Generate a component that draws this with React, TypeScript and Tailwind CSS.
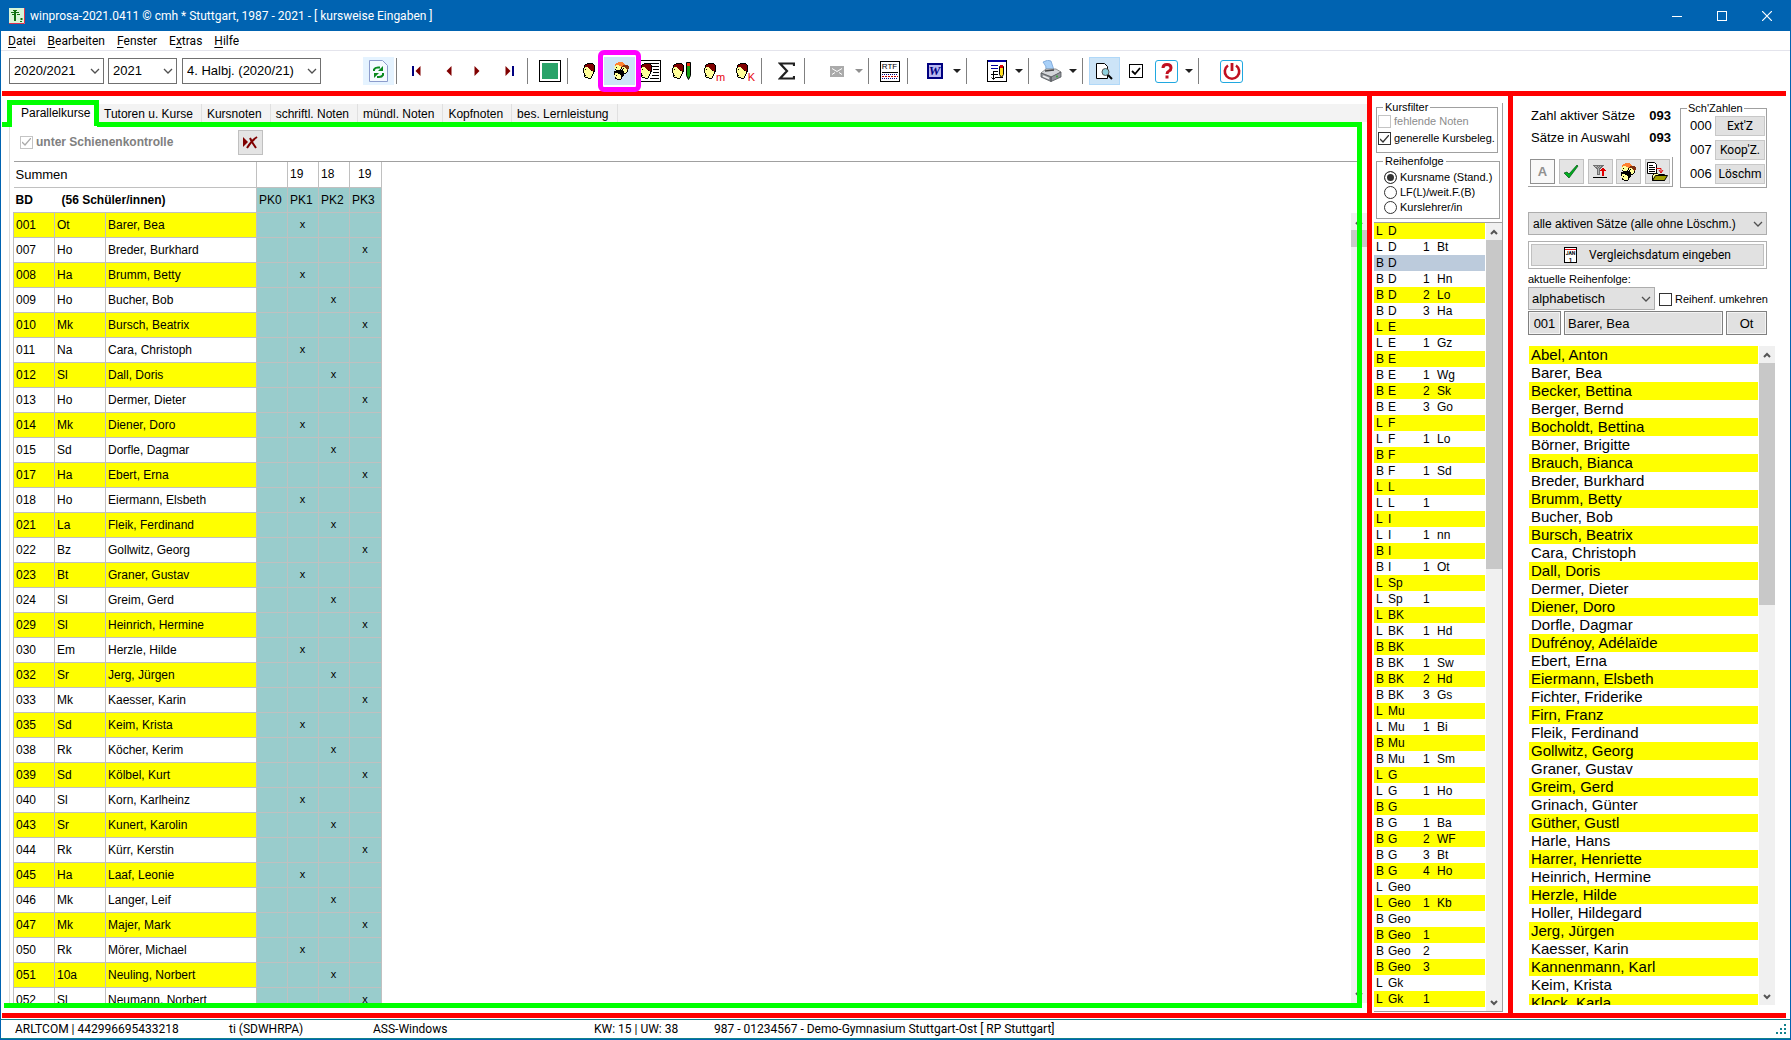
import React from "react";

const SANS = "font-['Liberation_Sans',Arial,sans-serif]";

/* ---------- data ---------- */
const STUDENTS = `001|Ot|Barer, Bea|1
007|Ho|Breder, Burkhard|3
008|Ha|Brumm, Betty|1
009|Ho|Bucher, Bob|2
010|Mk|Bursch, Beatrix|3
011|Na|Cara, Christoph|1
012|Sl|Dall, Doris|2
013|Ho|Dermer, Dieter|3
014|Mk|Diener, Doro|1
015|Sd|Dorfle, Dagmar|2
017|Ha|Ebert, Erna|3
018|Ho|Eiermann, Elsbeth|1
021|La|Fleik, Ferdinand|2
022|Bz|Gollwitz, Georg|3
023|Bt|Graner, Gustav|1
024|Sl|Greim, Gerd|2
029|Sl|Heinrich, Hermine|3
030|Em|Herzle, Hilde|1
032|Sr|Jerg, Jürgen|2
033|Mk|Kaesser, Karin|3
035|Sd|Keim, Krista|1
038|Rk|Köcher, Kerim|2
039|Sd|Kölbel, Kurt|3
040|Sl|Korn, Karlheinz|1
043|Sr|Kunert, Karolin|2
044|Rk|Kürr, Kerstin|3
045|Ha|Laaf, Leonie|1
046|Mk|Langer, Leif|2
047|Mk|Majer, Mark|3
050|Rk|Mörer, Michael|1
051|10a|Neuling, Norbert|2
052|Sl|Neumann, Norbert|3`
  .split("\n")
  .map((l) => l.split("|"));

const COURSES = `L|D||
L|D|1|Bt
B|D||
B|D|1|Hn
B|D|2|Lo
B|D|3|Ha
L|E||
L|E|1|Gz
B|E||
B|E|1|Wg
B|E|2|Sk
B|E|3|Go
L|F||
L|F|1|Lo
B|F||
B|F|1|Sd
L|L||
L|L|1|
L|I||
L|I|1|nn
B|I||
B|I|1|Ot
L|Sp||
L|Sp|1|
L|BK||
L|BK|1|Hd
B|BK||
B|BK|1|Sw
B|BK|2|Hd
B|BK|3|Gs
L|Mu||
L|Mu|1|Bi
B|Mu||
B|Mu|1|Sm
L|G||
L|G|1|Ho
B|G||
B|G|1|Ba
B|G|2|WF
B|G|3|Bt
B|G|4|Ho
L|Geo||
L|Geo|1|Kb
B|Geo||
B|Geo|1|
B|Geo|2|
B|Geo|3|
L|Gk||
L|Gk|1|`
  .split("\n")
  .map((l) => l.split("|"));

const NAMES = [
  "Abel, Anton", "Barer, Bea", "Becker, Bettina", "Berger, Bernd", "Bocholdt, Bettina", "Börner, Brigitte",
  "Brauch, Bianca", "Breder, Burkhard", "Brumm, Betty", "Bucher, Bob", "Bursch, Beatrix", "Cara, Christoph",
  "Dall, Doris", "Dermer, Dieter", "Diener, Doro", "Dorfle, Dagmar", "Dufrénoy, Adélaïde", "Ebert, Erna",
  "Eiermann, Elsbeth", "Fichter, Friderike", "Firn, Franz", "Fleik, Ferdinand", "Gollwitz, Georg",
  "Graner, Gustav", "Greim, Gerd", "Grinach, Günter", "Güther, Gustl", "Harle, Hans", "Harrer, Henriette",
  "Heinrich, Hermine", "Herzle, Hilde", "Holler, Hildegard", "Jerg, Jürgen", "Kaesser, Karin",
  "Kannenmann, Karl", "Keim, Krista", "Klock, Karla",
];

/* ---------- pixel icons ---------- */
const INK: Record<string, string> = {
  K: "#000000", R: "#800000", Y: "#ffff99", O: "#ff8030", B: "#803010",
  r: "#e00000", g: "#707070", l: "#b0b0b0",
};

function Pixels({ rows, x = 0, y = 0 }: { rows: string[]; x?: number; y?: number }) {
  return (
    <g shapeRendering="crispEdges">
      {rows.flatMap((row, j) =>
        [...row].map((c, i) =>
          INK[c] ? <rect key={i + "-" + j} x={x + i} y={y + j} width="1" height="1" fill={INK[c]} /> : null
        )
      )}
    </g>
  );
}

const FACE = [
  "....KKKKKK..",
  "..KKRRRRRRK.",
  ".KRRRRRRRRRK",
  ".KRRRRRRRRRK",
  ".KYYYRRRRRRK",
  "KYYYYYRRRRRK",
  "KYKYYYYRRRRK",
  "KYYYYYYYKRRK",
  "KYYYYYYYYYKK",
  "KYYYYYYYYYK.",
  ".KYYYYYYYYK.",
  ".KYYYYYYYK..",
  ".KKYYYYYYK..",
  ".KYYYYYYK...",
  "..KKKYYYK...",
  ".....KKK....",
];

const GROUP = [
  "....OOOOO......",
  "..OOOOOOOO.....",
  ".OOOOOOOOOO....",
  ".OYYYOOOOBBBBB.",
  ".YYYYYYOBBBBBBB",
  "YYKYYYYKYYYBBBB",
  ".YYYYYYKYKYYBBB",
  ".KYYYYK.KYYYYB.",
  "..KKKKKKKYYYYK.",
  "KKKKKKKKKKYYYK.",
  "KKKKKKKKKKYYK..",
  "KYYYKKKKKKKK...",
  "KYYYYYKKKK.....",
  "YYKYYYYKKK.....",
  ".YYYYYYKK......",
  ".KYYYYYK.......",
  ".KKYYYYK.......",
  "...KKKK........",
];

const FUNNEL = [
  "ggggggggggg...",
  ".gllglglgg....",
  "..gglglgg.....",
  "...gglgg.rr...",
  "....glg.rrrr..",
  "....glgrrrrrr.",
  "....glg..rr...",
  "....glg..rr...",
  "....glg..rr...",
  "....ggg..rr...",
  ".........rr...",
  "..............",
  "KKKKKKKKKKKKKK",
];

const I = ({ w, h, children }: { w: number; h: number; children: React.ReactNode }) => (
  <svg width={w} height={h} viewBox={`0 0 ${w} ${h}`} className="block shrink-0" aria-hidden="true">
    {children}
  </svg>
);

const Chevron = () => (
  <I w={10} h={6}>
    <path d="M1 1l4 4 4-4" fill="none" stroke="#505050" strokeWidth="1.3" />
  </I>
);
const ScrollArrow = ({ up = false }: { up?: boolean }) => (
  <I w={8} h={6}>
    <path d={up ? "M1 5l3-3 3 3" : "M1 1l3 3 3-3"} fill="none" stroke="#555" strokeWidth="2" />
  </I>
);

const AppIcon = () => (
  <I w={16} h={16}>
    <rect width="16" height="16" fill="#d8f5d8" />
    <path d="M15.5 0v15.5H0" fill="none" stroke="#e03050" />
    <path d="M2 4.500h8M3 6.500h4M4 2.500h4M8 6.500h3M11 13.500h2" stroke="#107010" fill="none" />
    <path d="M6 2v11M12.500 10v2" stroke="#107010" strokeWidth="2" fill="none" />
  </I>
);
const Refresh = () => (
  <I w={19} h={22}>
    <path d="M.5.5h13l5 5v16H.5z" fill="#f4faff" stroke="#8c9ccc" />
    <path d="M5 11V9.500q1-2 4-2h2" fill="none" stroke="#0a8a20" strokeWidth="2" />
    <path d="M9 11h5V6z" fill="#0a8a20" />
    <path d="M14 13v2q-1 2-4 2H8" fill="none" stroke="#0a8a20" strokeWidth="2" />
    <path d="M10 13H5v5z" fill="#0a8a20" />
  </I>
);
const Nav = ({ dir, bar = false }: { dir: "l" | "r"; bar?: boolean }) => (
  <I w={9} h={10}>
    {dir === "l" ? <path d="M8.500 0v10L3.500 5z" fill="#800000" /> : <path d="M.5 0v10l5-5z" fill="#800000" />}
    {bar && <rect x={dir === "l" ? 0 : 7} y="0" width="2" height="10" fill="#000080" />}
  </I>
);
const GreenSquare = () => (
  <I w={22} h={22}>
    <rect x=".5" y=".5" width="21" height="21" fill="#fff" stroke="#000" />
    <rect x="3" y="3" width="16" height="16" fill="#2aa36a" />
  </I>
);
const Face = () => <I w={12} h={16}><Pixels rows={FACE} /></I>;
const Group = () => <I w={15} h={18}><Pixels rows={GROUP} /></I>;
const FaceDoc = () => (
  <I w={21} h={22}>
    <rect x=".5" y=".5" width="20" height="21" fill="#fff" stroke="#000" />
    <path d="M10 3.500h9M12 6.500h7M13 9.500h6M13 12.500h6M12 15.500h7M10 18.500h9" stroke="#000" shapeRendering="crispEdges" />
    <Pixels rows={FACE} y={3} />
  </I>
);
const FacePencil = () => (
  <I w={19} h={18}>
    <Pixels rows={FACE} y={1} />
    <path d="M14.500.5h4v13l-2 4-2-4z" fill="#10a010" stroke="#000" />
    <rect x="15" y="1" width="3" height="3" fill="#f03010" />
  </I>
);
const FaceLetter = ({ ch }: { ch: string }) => (
  <span className="flex items-end">
    <Face />
    <span className="-mr-1 -mb-1 text-[11px] leading-3 text-red-600">{ch}</span>
  </span>
);
const Sigma = () => (
  <I w={17} h={18}>
    <path d="M16 4V1.500H2L9 9l-7 7.500h14V14" fill="none" stroke="#202020" strokeWidth="2.200" />
  </I>
);
const Mail = () => (
  <I w={14} h={11}>
    <rect width="14" height="11" fill="#aaaaaa" />
    <path d="M2 2.500l5 3 5-3M2 8.500l3-2M12 8.500l-3-2" stroke="#fff" fill="none" />
  </I>
);
const Rtf = () => (
  <span className="flex h-[21px] w-5 shrink-0 flex-col items-center border border-black bg-white">
    <span className="text-[8px] leading-[10px] text-black">RTF</span>
    <I w={16} h={8}>
      <path d="M0 .5h16" stroke="#000" />
      <path d="M0 2.500h16M0 6.500h16" stroke="#000080" strokeDasharray="1 1" />
      <path d="M0 4.500h16" stroke="#c00000" strokeDasharray="2 1" />
    </I>
  </span>
);
const Word = () => (
  <span className="flex size-4 shrink-0 items-center justify-center border-2 border-[#000080] bg-[#b8b8f0] font-['Liberation_Serif',serif] text-[13px] leading-3 font-bold text-[#000080] italic">W</span>
);
const DocPencil = () => (
  <I w={20} h={22}>
    <rect x=".5" y=".5" width="19" height="21" fill="#fff" stroke="#000" />
    <rect x="1" y="0" width="18" height="2" fill="#0000a0" />
    <path d="M4 5.500h7M4 8.500h7" stroke="#0000a0" />
    <path d="M6 11.500h5M4 14.500h7M8 17.500h8" stroke="#000" />
    <path d="M6.500 11v8M4.500 17.500l2 2 2-2" stroke="#000" fill="none" />
    <path d="M12.500 6.500h4v8l-2 3-2-3z" fill="#ffe020" stroke="#000" />
    <rect x="13" y="5" width="3" height="3" fill="#e00000" />
  </I>
);
const Printer = () => (
  <I w={22} h={22}>
    <path d="M3 2q5-3 8-1l3 9-8 1q1-5-3-9z" fill="#a8d0f8" stroke="#6898d0" strokeWidth=".7" />
    <path d="M1 13l5-4h10l5 3-9 5z" fill="#d4d6da" stroke="#777" strokeWidth=".8" />
    <path d="M5 11l9-1" stroke="#444" strokeWidth="1.500" />
    <path d="M1 13v4l10 4.500V17zM11 17l10-5v5l-10 4.500z" fill="#90949a" stroke="#505458" strokeWidth=".8" />
    <path d="M3 16l6 2.500" stroke="#eee" strokeWidth="1.500" />
    <circle cx="17" cy="16.500" r="1" fill="#3a3" />
  </I>
);
const Preview = () => (
  <I w={17} h={17}>
    <path d="M.5.500h8l3 3v12H.5z" fill="#fff" stroke="#000" />
    <circle cx="9.500" cy="9" r="3.500" fill="#8fd0dc" stroke="#555" />
    <path d="M12 12l4 4" stroke="#000" strokeWidth="2" />
  </I>
);
const Tick = () => (
  <I w={14} h={14}>
    <rect x=".5" y=".5" width="13" height="13" fill="#fff" stroke="#000" />
    <path d="M3 7l3 3 5-6" fill="none" stroke="#000" strokeWidth="1.800" />
  </I>
);
const Help = () => (
  <span className="flex h-[23px] w-[23px] items-center justify-center rounded-[3px] border border-[#20a8e0] bg-white">
    <I w={12} h={16}>
      <path d="M2 5q0-3.500 4-3.500T10 5q0 2-2 3T6 11" fill="none" stroke="#c01020" strokeWidth="3" />
      <rect x="4.500" y="12.500" width="3" height="3" fill="#c01020" />
    </I>
  </span>
);
const Power = () => (
  <span className="flex h-[23px] w-[23px] items-center justify-center rounded-[3px] border border-[#20a8e0] bg-white">
    <I w={18} h={18}>
      <path d="M5 3.500a7.200 7.200 0 1 0 8 0" fill="none" stroke="#c01020" strokeWidth="2.600" />
      <path d="M9 1v8" stroke="#c01020" strokeWidth="2.800" />
    </I>
  </span>
);
const Cross = () => (
  <I w={15} h={13}>
    <path d="M0 1l5 5-5 5z" fill="#800000" />
    <path d="M4 12Q8 5 14 1M7 2l2 4 4 6" fill="none" stroke="#800000" strokeWidth="2" />
  </I>
);
const GreenCheck = () => (
  <I w={16} h={15}>
    <path d="M1 9l3-1 2 2L14 1l1 1L6 14z" fill="#00b020" stroke="#005010" strokeWidth=".7" />
  </I>
);
const Funnel = () => <I w={14} h={13}><Pixels rows={FUNNEL} /></I>;
const Folder = () => (
  <I w={21} h={20}>
    <path d="M.5.500h7l2 2v9H.5z" fill="#fff" stroke="#000" />
    <path d="M2 3.500h4M2 5.500h6M2 7.500h6M2 9.500h6" stroke="#000" />
    <path d="M9 6.500h5v4M12 8l2 3 2-3" stroke="#e00000" fill="none" />
    <path d="M5.500 13.500l2-2h3l1 1h6v6h-12z" fill="#ffff99" stroke="#000" />
    <path d="M5.500 18.500l3-5h12l-3 5z" fill="#a0a000" stroke="#000" />
  </I>
);
const Calendar = () => (
  <span className="flex h-4 w-[13px] shrink-0 flex-col items-center border border-black bg-white">
    <span className="h-[2px] w-full border-b border-red-600" />
    <span className="text-[5px] leading-[7px] font-bold text-black">JAN</span>
    <span className="text-[6px] leading-[5px] font-bold text-black">1</span>
  </span>
);

/* ---------- controls ---------- */
const Sep = () => (
  <div className="flex h-[26px] w-[5px] shrink-0 justify-center">
    <div className="w-px bg-[#808080]" />
  </div>
);
function Tool({ label, className = "", children }: { label: string; className?: string; children: React.ReactNode }) {
  return (
    <button aria-label={label} className={"flex h-7 w-[31px] shrink-0 items-center justify-center " + className}>
      {children}
    </button>
  );
}
const Drop = ({ label, dim = false }: { label: string; dim?: boolean }) => (
  <button aria-label={label} className="flex h-7 w-[14px] shrink-0 items-center justify-center">
    <I w={8} h={4}><path d="M0 0h8L4 4z" fill={dim ? "#909090" : "#202020"} /></I>
  </button>
);
function Combo({ label, value, className, selectClass }: { label: string; value: string; className: string; selectClass: string }) {
  return (
    <div className={"relative flex items-center " + className}>
      <select aria-label={label} className={"h-full w-full appearance-none rounded-none border pr-5 pl-1 text-black " + selectClass}>
        <option>{value}</option>
      </select>
      <span className="pointer-events-none absolute right-1"><Chevron /></span>
    </div>
  );
}
function Check({ label, checked = false, disabled = false, className = "" }: { label: string; checked?: boolean; disabled?: boolean; className?: string }) {
  return (
    <label className={"flex items-center gap-[3px] whitespace-nowrap " + className}>
      <span className="relative flex size-[13px] shrink-0 items-center justify-center">
        <input
          type="checkbox"
          defaultChecked={checked}
          disabled={disabled}
          className="size-[13px] appearance-none border border-[#333] bg-white disabled:border-[#c4c4c4]"
        />
        {checked && (
          <span className="pointer-events-none absolute">
            <I w={9} h={8}>
              <path d="M0 4l3 3 6-7" fill="none" stroke={disabled ? "#aaa" : "#333"} strokeWidth="1.300" />
            </I>
          </span>
        )}
      </span>
      {label}
    </label>
  );
}
const Radio = ({ label, checked = false }: { label: string; checked?: boolean }) => (
  <label className="flex h-[15px] items-center gap-[3px] whitespace-nowrap">
    <input
      type="radio"
      name="reihenfolge"
      defaultChecked={checked}
      className="size-[13px] shrink-0 appearance-none rounded-full border border-[#333] bg-white checked:bg-[#333] checked:shadow-[inset_0_0_0_2px_white]"
    />
    {label}
  </label>
);
function Scroll({ thumb }: { thumb: string }) {
  return (
    <div className="flex w-4 shrink-0 flex-col items-center bg-[#f0f0f0]" aria-hidden="true">
      <div className="flex h-[17px] shrink-0 items-center"><ScrollArrow up /></div>
      <div className={"w-full bg-[#c8c8c8] " + thumb} />
      <div className="flex-1" />
      <div className="flex h-[17px] shrink-0 items-center"><ScrollArrow /></div>
    </div>
  );
}

/* ---------- sections ---------- */
function TitleBar() {
  return (
    <header className="flex h-[31px] shrink-0 items-center bg-[#0063b1] pl-2 text-xs text-white">
      <AppIcon />
      <h1 className="ml-[5px] flex-1">winprosa-2021.0411 © cmh * Stuttgart, 1987 - 2021 - [ kursweise Eingaben ]</h1>
      <button aria-label="Minimieren" className="flex h-full w-[45px] items-center justify-center">
        <I w={10} h={10}><path d="M0 5.500h10" stroke="#fff" /></I>
      </button>
      <button aria-label="Maximieren" className="flex h-full w-[45px] items-center justify-center">
        <I w={10} h={10}><rect x=".5" y=".5" width="9" height="9" fill="none" stroke="#fff" /></I>
      </button>
      <button aria-label="Schließen" className="flex h-full w-[46px] items-center justify-center">
        <I w={10} h={10}><path d="M0 0l10 10M10 0L0 10" stroke="#fff" strokeWidth="1.200" /></I>
      </button>
    </header>
  );
}

const MENU = [["", "D", "atei"], ["", "B", "earbeiten"], ["", "F", "enster"], ["E", "x", "tras"], ["", "H", "ilfe"]];

function MenuBar() {
  return (
    <nav className="flex h-5 shrink-0 items-center gap-3 border-b border-[#e4e4ec] pl-[7px] text-xs text-black">
      {MENU.map(([a, b, c]) => (
        <button key={b}>{a}<span className="underline underline-offset-2">{b}</span>{c}</button>
      ))}
    </nav>
  );
}

function Toolbar() {
  const box = "border-[#707070] bg-white text-[13px]";
  return (
    <div className={"flex h-10 shrink-0 items-center pl-2 " + SANS}>
      <Combo label="Schuljahr" value="2020/2021" className="h-[26px] w-[95px]" selectClass={box} />
      <Combo label="Jahr" value="2021" className="ml-1 h-[26px] w-[69px]" selectClass={box} />
      <Combo label="Halbjahr" value="4. Halbj. (2020/21)" className="ml-[5px] h-[26px] w-[139px]" selectClass={box} />
      <Tool label="Aktualisieren" className="ml-[42px] bg-[#e5f3ff]"><Refresh /></Tool>
      <Sep />
      <Tool label="Erster" className="ml-[2px]"><Nav dir="l" bar /></Tool>
      <Tool label="Zurück"><Nav dir="l" /></Tool>
      <Tool label="Weiter"><Nav dir="r" /></Tool>
      <Tool label="Letzter"><Nav dir="r" bar /></Tool>
      <Sep />
      <Tool label="Tabelle" className="ml-1"><GreenSquare /></Tool>
      <Sep />
      <Tool label="Schüler" className="ml-[3px]"><Face /></Tool>
      <Tool label="Kurse" className="relative bg-[#cce4f7] pl-1">
        <Group />
        <span className="pointer-events-none absolute -inset-x-[6px] -inset-y-[7px] z-10 rounded-md border-5 border-[#ff00ff]" />
      </Tool>
      <Tool label="Schülerliste"><FaceDoc /></Tool>
      <Tool label="Bearbeiten"><FacePencil /></Tool>
      <Tool label="mündlich"><FaceLetter ch="m" /></Tool>
      <Tool label="Kopfnoten"><FaceLetter ch="K" /></Tool>
      <Sep />
      <Tool label="Summe" className="ml-[7px]"><Sigma /></Tool>
      <Sep />
      <Tool label="Mail" className="ml-[14px]"><Mail /></Tool>
      <Drop label="Mail-Optionen" dim />
      <Sep />
      <Tool label="RTF" className="ml-[3px]"><Rtf /></Tool>
      <Sep />
      <Tool label="Word" className="ml-[9px]"><Word /></Tool>
      <Drop label="Word-Optionen" />
      <Sep />
      <Tool label="Formular" className="ml-3"><DocPencil /></Tool>
      <Drop label="Formular-Optionen" />
      <Sep />
      <Tool label="Drucken" className="ml-1"><Printer /></Tool>
      <Drop label="Druck-Optionen" />
      <Sep />
      <Tool label="Vorschau" className="ml-1 border border-[#b0d8f8] bg-[#cce4f7]"><Preview /></Tool>
      <Tool label="Auswahl"><Tick /></Tool>
      <Tool label="Hilfe"><Help /></Tool>
      <Drop label="Hilfe-Optionen" />
      <Sep />
      <Tool label="Beenden" className="ml-[15px]"><Power /></Tool>
    </div>
  );
}

const TABS = ["Tutoren u. Kurse", "Kursnoten", "schriftl. Noten", "mündl. Noten", "Kopfnoten", "bes. Lernleistung"];

function CoursePanel() {
  const line = "border-[#c0c0c0]";
  return (
    <main className={"relative flex min-w-0 flex-1 flex-col text-xs text-black " + SANS}>
      <div className="flex h-[26px] shrink-0 items-end pl-[6px]" role="tablist">
        <button role="tab" aria-selected="true" className="z-10 mt-1 flex h-[26px] w-[92px] shrink-0 items-start self-start border-x-5 border-t-5 border-[#00ff00] bg-white pl-[9px]">
          Parallelkurse
        </button>
        <div className="flex h-[18px] flex-1 bg-[#f3f3f3]">
          {TABS.map((t) => (
            <button key={t} role="tab" className="border-r border-[#e0e0e0] pt-[3px] pr-2 pl-[5px] leading-[15px] whitespace-nowrap">{t}</button>
          ))}
        </div>
      </div>
      <div className="ml-2 flex min-h-0 flex-1 flex-col border-l border-[#dcdcdc] pt-[6px]">
        <div className="flex h-[33px] shrink-0 items-start pt-[2px] pl-[10px]">
          <Check label="unter Schienenkontrolle" checked disabled className="h-6 w-[218px] font-bold text-[#808080]" />
          <button aria-label="Kontrolle löschen" className="flex size-[25px] items-center justify-center border border-[#c0c0c0] bg-[#e4e4e4]">
            <Cross />
          </button>
        </div>
        <div className="mr-[10px] ml-1 h-px shrink-0 bg-[#a0a0a0]" />
        <div className="flex min-h-0 flex-1 pl-[3px]">
          <div className="min-w-0 flex-1 overflow-hidden">
            <table className="w-[368px] table-fixed border-collapse">
              <colgroup>
                <col className="w-[41px]" /><col className="w-[51px]" /><col className="w-[151px]" />
                <col className="w-[31px]" /><col className="w-[31px]" /><col className="w-[31px]" /><col className="w-[32px]" />
              </colgroup>
              <thead>
                <tr className={"h-[25px] border-b " + line}>
                  <th colSpan={3} className="pl-[2px] text-left text-[13px] font-normal">Summen</th>
                  <td className={"border-x " + line} />
                  <td className={"border-x pl-[2px] " + line}>19</td>
                  <td className={"border-x pl-[2px] " + line}>18</td>
                  <td className={"border-x pl-2 " + line}>19</td>
                </tr>
                <tr className={"h-[25px] border-b " + line}>
                  <th colSpan={3} className="pl-[2px] text-left font-bold">
                    <span className="inline-block w-[46px]">BD</span>(56 Schüler/innen)
                  </th>
                  {["PK0", "PK1", "PK2", "PK3"].map((p) => (
                    <th key={p} className={"border-x bg-[#99cccc] pl-[2px] text-left font-normal " + line}>{p}</th>
                  ))}
                </tr>
              </thead>
              <tbody>
                {STUDENTS.map(([nr, tu, name, k], i) => (
                  <tr key={nr} className={"h-[25px] " + (i % 2 ? "bg-white" : "bg-[#ffff00]")}>
                    <td className={"border pl-[2px] " + line}>{nr}</td>
                    <td className={"border pl-[2px] " + line}>{tu}</td>
                    <td className={"border pl-[2px] " + line}>{name}</td>
                    {["0", "1", "2", "3"].map((c) => (
                      <td key={c} className={"border bg-[#99cccc] pr-px text-center text-[11px] " + line}>{c === k ? "x" : ""}</td>
                    ))}
                  </tr>
                ))}
              </tbody>
            </table>
          </div>
          <div className="mt-[51px] mb-[10px] flex"><Scroll thumb="h-[17px]" /></div>
        </div>
      </div>
      <div className="pointer-events-none absolute top-[26px] right-[5px] bottom-[5px] left-[96px] border-t-5 border-r-5 border-[#00ff00]" />
      <div className="pointer-events-none absolute right-[5px] bottom-0 left-[3px] h-[10px] border-t-5 border-[#00ff00] bg-white" />
      <div className="pointer-events-none absolute top-[26px] left-px h-[5px] w-[10px] bg-[#00ff00]" />
    </main>
  );
}

function FilterPanel() {
  return (
    <aside className={"flex w-[136px] shrink-0 flex-col pt-[7px] pr-[5px] pb-px pl-[2px] text-[11px] text-black " + SANS}>
      <div className="flex min-h-0 flex-1 flex-col border-r border-b border-[#a0a0a0]">
        <div className="h-[119px] shrink-0 pr-1 pl-[2px]">
          <fieldset className="-mt-[3px] h-[53px] border border-[#a0a0a0] px-px">
            <legend className="ml-[5px] px-[2px] leading-[14px]">Kursfilter</legend>
            <Check label="fehlende Noten" disabled className="h-[15px] text-[#8c8c8c]" />
            <Check label="generelle Kursbeleg." checked className="mt-[2px] h-[15px]" />
          </fieldset>
          <fieldset className="mt-px h-[65px] border border-[#a0a0a0] px-[7px]">
            <legend className="-ml-px px-[2px] leading-[14px]">Reihenfolge</legend>
            <div className="pt-[2px]">
              <Radio label="Kursname (Stand.)" checked />
              <Radio label="LF(L)/weit.F.(B)" />
              <Radio label="Kurslehrer/in" />
            </div>
          </fieldset>
        </div>
        <div className="flex min-h-0 flex-1 border-t border-[#a0a0a0]">
          <ul className="mr-px min-w-0 flex-1 overflow-hidden text-xs leading-4">
            {COURSES.map(([a, b, c, d], i) => (
              <li key={i} className={"flex h-4 pl-[2px] " + (i === 2 ? "bg-[#bccbdc]" : i % 2 ? "bg-white" : "bg-[#ffff00]")}>
                <span className="w-3">{a}</span>
                <span className="w-[35px]">{b}</span>
                <span className="w-[14px]">{c}</span>
                <span>{d}</span>
              </li>
            ))}
          </ul>
          <Scroll thumb="h-[329px]" />
        </div>
      </div>
    </aside>
  );
}

function CountRow({ n, label }: { n: string; label: string }) {
  return (
    <div className="flex items-center justify-between">
      <span>{n}</span>
      <button className="h-5 w-[50px] border border-[#c8c8c8] bg-[#e1e1e1] font-[Roboto,sans-serif] text-xs leading-none">{label}</button>
    </div>
  );
}

function SelectionPanel() {
  const tool = "flex size-[25px] items-center justify-center border ";
  const grey = tool + "border-[#c0c0c0] bg-[#e4e4e4]";
  const field = "h-6 border border-[#808080] bg-[#e1e1e1] text-[13px] outline outline-1 -outline-offset-2 outline-[#f4f4f4]";
  return (
    <aside className={"flex w-[277px] shrink-0 flex-col pr-[15px] pl-[15px] text-xs text-black " + SANS}>
      <div className="flex h-[116px] shrink-0 justify-between pr-2 text-[13px]">
        <div className="flex w-[145px] flex-col">
          <dl className="mt-[9px] grid grid-cols-[1fr_auto] pr-[2px] pl-[3px] leading-[22px]">
            <dt>Zahl aktiver Sätze</dt><dd className="font-bold">093</dd>
            <dt>Sätze in Auswahl</dt><dd className="font-bold">093</dd>
          </dl>
          <div className="mt-2 flex h-[30px] items-center justify-between border-r border-b border-[#a0a0a0] px-[2px]">
            <button className={tool + "border-[#909090] bg-[#f8f8f8] font-bold text-[#909090]"}>A</button>
            <button aria-label="Übernehmen" className={grey}><GreenCheck /></button>
            <button aria-label="Filter" className={grey}><Funnel /></button>
            <button aria-label="Gruppe" className={grey}><Group /></button>
            <button aria-label="Ablage" className={grey}><Folder /></button>
          </div>
        </div>
        <fieldset className="mt-[5px] h-[87px] w-[87px] border border-[#a0a0a0] pr-px pl-[9px]">
          <legend className="-ml-[3px] px-px text-[11px] leading-[14px]">Sch'Zahlen</legend>
          <div className="flex flex-col gap-1 pt-px">
            <CountRow n="000" label="Ext'Z" />
            <CountRow n="007" label="Koop'Z." />
            <CountRow n="006" label="Löschm" />
          </div>
        </fieldset>
      </div>
      <div className="mr-2 shrink-0">
        <Combo label="Auswahl" value="alle aktiven Sätze (alle ohne Löschm.)" className="h-[23px]" selectClass="border-[#adadad] bg-[#e1e1e1]" />
        <div className="mt-[6px] flex h-7 border border-[#b0b0b0] p-[2px]">
          <button className="flex flex-1 items-center justify-center gap-3 border border-[#c0c0c0] bg-[#e1e1e1] font-[Roboto,sans-serif] text-xs">
            <Calendar />Vergleichsdatum eingeben
          </button>
        </div>
        <label htmlFor="order" className="mt-[2px] block text-[11px] leading-4">aktuelle Reihenfolge:</label>
        <div className="flex items-center gap-1">
          <div className="relative flex h-[23px] w-[127px] shrink-0 items-center">
            <select id="order" className="h-full w-full appearance-none border border-[#adadad] bg-[#e1e1e1] pl-[3px] text-[13px]">
              <option>alphabetisch</option>
            </select>
            <span className="pointer-events-none absolute right-1"><Chevron /></span>
          </div>
          <Check label="Reihenf. umkehren" className="pt-[2px] text-[11px]" />
        </div>
        <div className="mt-px flex gap-[3px]">
          <input aria-label="Nummer" defaultValue="001" className={"w-[33px] text-center " + field} />
          <input aria-label="Name" defaultValue="Barer, Bea" className={"min-w-0 flex-1 pl-[3px] " + field} />
          <input aria-label="Tutor" defaultValue="Ot" className={"w-[41px] text-center " + field} />
        </div>
      </div>
      <div className="mt-[11px] mb-2 ml-px flex min-h-0 flex-1">
        <ul className="mr-px min-w-0 flex-1 overflow-hidden text-[15px] leading-[18px]">
          {NAMES.map((n, i) => (
            <li key={n} className={"h-[18px] pl-[2px] " + (i % 2 ? "bg-white" : "bg-[#ffff00]")}>{n}</li>
          ))}
        </ul>
        <Scroll thumb="h-[242px]" />
      </div>
    </aside>
  );
}

function StatusBar() {
  return (
    <footer className="mt-px flex h-5 shrink-0 items-center border-y border-[#10808c] pl-[14px] text-xs whitespace-nowrap text-black">
      <span className="w-[214px]">ARLTCOM | 442996695433218</span>
      <span className="w-36">ti (SDWHRPA)</span>
      <span className="w-[221px]">ASS-Windows</span>
      <span className="w-[120px]">KW: 15 | UW: 38</span>
      <span className="flex-1">987 - 01234567 - Demo-Gymnasium Stuttgart-Ost [ RP Stuttgart]</span>
      <span className="mr-1 self-end pb-1">
        <I w={10} h={10}>
          <path d="M8 0h2v2H8zM4 4h2v2H4zM8 4h2v2H8zM0 8h2v2H0zM4 8h2v2H4zM8 8h2v2H8z" fill="#10808c" />
        </I>
      </span>
    </footer>
  );
}

export default function App() {
  return (
    <div className="flex h-screen flex-col overflow-hidden border-x border-b border-[#0063b1] bg-white font-[Roboto,sans-serif]">
      <TitleBar />
      <MenuBar />
      <Toolbar />
      <div className="mr-1 ml-px h-[5px] shrink-0 bg-[#ff0000]" />
      <div className="flex min-h-0 flex-1">
        <CoursePanel />
        <div className="w-[5px] shrink-0 bg-[#ff0000]" />
        <FilterPanel />
        <div className="w-[5px] shrink-0 bg-[#ff0000]" />
        <SelectionPanel />
      </div>
      <div className="mr-1 ml-px h-[5px] shrink-0 bg-[#ff0000]" />
      <StatusBar />
    </div>
  );
}
